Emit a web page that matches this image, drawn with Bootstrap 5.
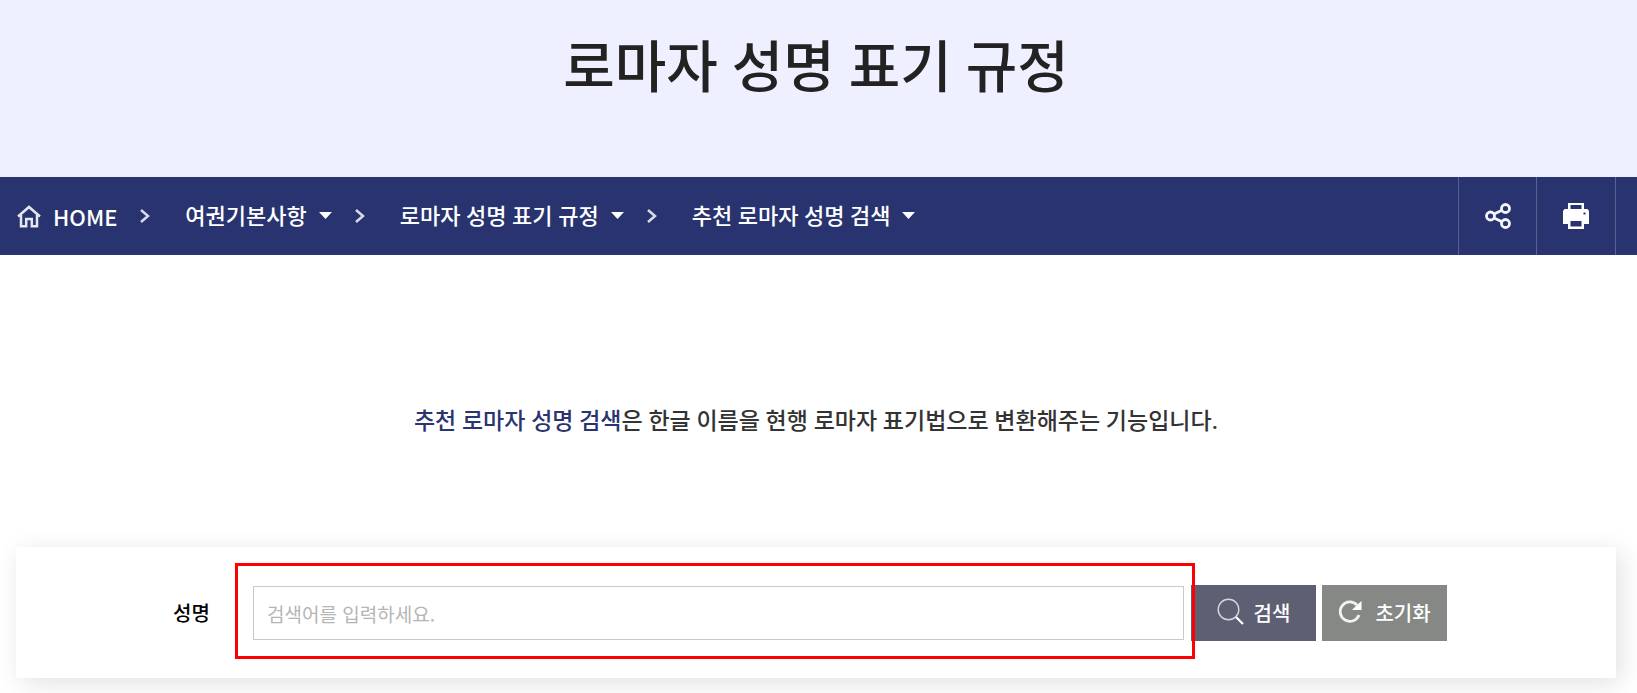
<!DOCTYPE html>
<html lang="ko">
<head>
<meta charset="utf-8">
<meta name="viewport" content="width=device-width, initial-scale=1">
<title>로마자 성명 표기 규정</title>
<link href="https://cdn.jsdelivr.net/npm/bootstrap@5.3.0/dist/css/bootstrap.min.css" rel="stylesheet">
<style>
body{font-family:Roboto,"Noto Sans CJK KR",sans-serif;font-weight:500;color:#333;background:#fff;min-height:100vh;overflow-x:hidden}
.wrap{padding-left:16px;padding-right:21px}
.hero{background:#eeefff;height:177px;padding-top:26px}
.hero h1{font-size:56px;line-height:84px;font-weight:500;color:#222}
.path-bar{background:#28336f;min-height:78px}
.path-bar a,.path-bar .menu-btn{color:#fff;font-size:22px;line-height:32px;font-weight:500;text-decoration:none}
.path-bar a{font-family:"Noto Sans CJK KR",sans-serif}
.path-bar .menu-btn{font-family:Lato,"Noto Sans CJK KR",sans-serif}
.menu-btn{background:none;border:0;padding:0;display:flex;align-items:center;gap:12px}
.crumb-sep{margin:0 34px 0 22px}
.tool-btn{width:78px;border:0;border-left:1px solid #59618f;background:none}
.tool-btn:last-child{width:80px;border-right:1px solid #59618f}
.intro{font-size:23px;line-height:34px;padding-top:150px;padding-bottom:108px}
.intro strong{color:#293471;font-weight:500}
.search-card{box-shadow:5px 5px 24px rgba(0,0,0,.12);padding:38px 169px 37px 157px}
.search-card label{font-family:"Noto Sans CJK KR",sans-serif;font-size:20px;line-height:28px;color:#000;width:80px}
.name-input{height:54px;border:1px solid #c8c9cb;border-radius:0;font-family:"Noto Sans CJK KR",sans-serif;font-size:19px;padding:0 13px;font-weight:400}
.name-input::placeholder{color:#b5b5b5}
.focus-frame{position:absolute;inset:-23px -11px -19px -18px;border:3px solid #f00;pointer-events:none;z-index:2}
.actions{gap:6px;padding-left:7px}
.act-btn{width:125px;height:56px;border:0;color:#fff;font-family:"Noto Sans CJK KR",sans-serif;font-size:20px;font-weight:500;display:flex;align-items:center;justify-content:center}
.act-search{background:#5d6073;gap:10px}
.act-reset{background:#868886;gap:13px}
.act-btn svg{margin-bottom:3px}
</style>
</head>
<body>
<header class="hero wrap text-center"><h1 class="m-0">로마자 성명 표기 규정</h1></header>
<nav class="path-bar wrap d-flex justify-content-between align-items-stretch" aria-label="현재 위치">
  <div class="d-flex align-items-center">
    <a href="#" class="d-flex align-items-center"><svg class="me-2" width="29" height="26" viewBox="0 0 29 26" fill="none" stroke="#e4e6f0" stroke-width="2.500"><path d="M2 13.500 13 4l11 9.500M5 12v11.200h5.200V16h5.600v7.200H21V12"/></svg>HOME</a>
    <svg class="crumb-sep" width="12" height="14" viewBox="0 0 12 14" fill="none" stroke="#d9dbe8" stroke-width="2.500"><path d="m2 1 7 6-7 6"/></svg>
    <button type="button" class="menu-btn">여권기본사항<svg width="13" height="8" viewBox="0 0 13 8"><path fill="#fff" d="M0 0h13L6.500 7z"/></svg></button>
    <svg class="crumb-sep" width="12" height="14" viewBox="0 0 12 14" fill="none" stroke="#d9dbe8" stroke-width="2.500"><path d="m2 1 7 6-7 6"/></svg>
    <button type="button" class="menu-btn">로마자 성명 표기 규정<svg width="13" height="8" viewBox="0 0 13 8"><path fill="#fff" d="M0 0h13L6.500 7z"/></svg></button>
    <svg class="crumb-sep" width="12" height="14" viewBox="0 0 12 14" fill="none" stroke="#d9dbe8" stroke-width="2.500"><path d="m2 1 7 6-7 6"/></svg>
    <button type="button" class="menu-btn">추천 로마자 성명 검색<svg width="13" height="8" viewBox="0 0 13 8"><path fill="#fff" d="M0 0h13L6.500 7z"/></svg></button>
  </div>
  <div class="d-flex">
    <button type="button" class="tool-btn" aria-label="공유"><svg width="26" height="26" viewBox="0 0 26 26" fill="none" stroke="#f4f4fa" stroke-width="2.800"><circle cx="5.500" cy="13" r="4"/><circle cx="20.500" cy="5.500" r="4"/><circle cx="20.500" cy="20.500" r="4"/><path d="m9 11 8-3.800M9 15l8 3.800"/></svg></button>
    <button type="button" class="tool-btn" aria-label="인쇄"><svg width="26" height="26" viewBox="0 0 26 26"><path fill="#fff" fill-rule="evenodd" d="M5 0h16v6h3.500L26 8v13h-5v5H5v-5H0V8l1.500-2H5zM7.500 2v4h11V2zM7.500 18v5.500h11V18zM20.500 9.500v2h2v-2z"/></svg></button>
  </div>
</nav>
<main class="wrap">
  <p class="intro text-center m-0"><strong>추천 로마자 성명 검색</strong>은 한글 이름을 현행 로마자 표기법으로 변환해주는 기능입니다.</p>
  <form class="search-card d-flex align-items-center">
    <label for="name">성명</label>
    <div class="position-relative flex-grow-1"><input id="name" type="text" class="name-input form-control" placeholder="검색어를 입력하세요."><span class="focus-frame"></span></div>
    <div class="actions d-flex">
    <button type="button" class="act-btn act-search"><svg width="27" height="27" viewBox="0 0 27 27" fill="none" stroke="#fff"><circle cx="11.500" cy="11.500" r="10.300" stroke-width="1.400" opacity=".75"/><path d="m19 19 7 7" stroke-width="2.200"/></svg>검색</button>
    <button type="reset" class="act-btn act-reset"><svg width="24" height="24" viewBox="0 0 24 24"><path d="M19 5A9.700 9.700 0 1 0 21 15" fill="none" stroke="#f2f2f2" stroke-width="2.800"/><path fill="#fff" d="M23.500 1v9H14l4-4z"/></svg>초기화</button>
    </div>
  </form>
</main>
<script src="https://cdn.jsdelivr.net/npm/bootstrap@5.3.0/dist/js/bootstrap.bundle.min.js"></script>
</body>
</html>
